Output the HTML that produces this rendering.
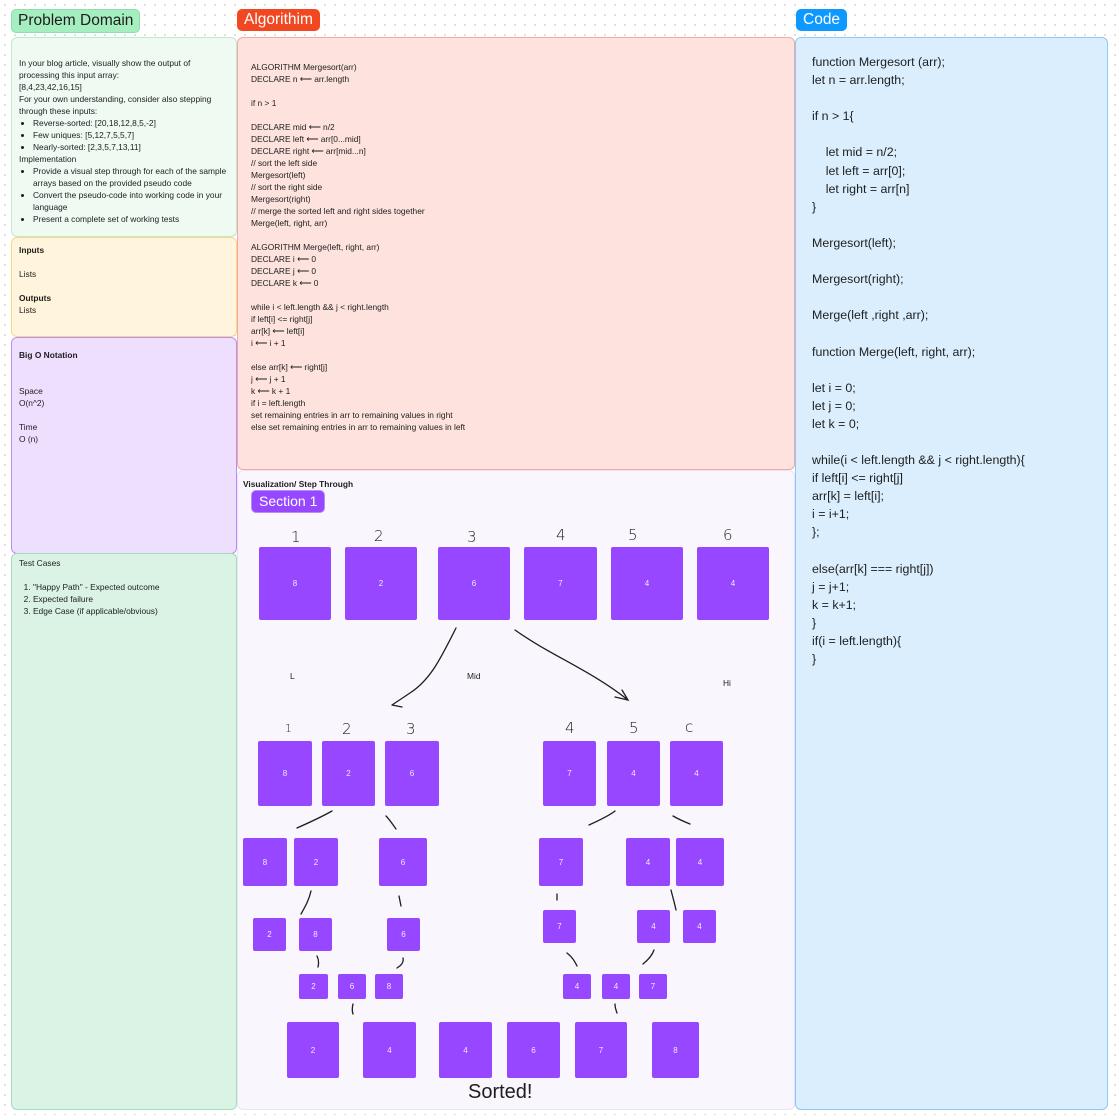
<!DOCTYPE html>
<html><head><meta charset="utf-8"><style>
*{margin:0;padding:0;box-sizing:border-box}
body{width:1117px;height:1115px;position:relative;overflow:hidden;background:#fff;font-family:"Liberation Sans",sans-serif;color:#1e1e1e;
background-image:radial-gradient(#d6d6d6 0.8px,transparent 1px);background-size:10px 10px}
.a{position:absolute}
.p{position:absolute;border:1px solid;border-radius:6px}
.tag{position:absolute;border-radius:5px;font-size:15.5px;line-height:22px;padding:0 7px}
.t{position:absolute;font-size:8.4px;line-height:12px;white-space:pre}
.code{position:absolute;font-size:12.4px;line-height:18.1px;white-space:pre;left:812px;top:53px}
.b{position:absolute;background:#9747ff;border-radius:2px;color:#f3eaff;font-size:8px;display:flex;align-items:center;justify-content:center}
.n{position:absolute;font-size:15px;font-family:"DejaVu Sans",sans-serif;font-weight:300}
ul,ol{padding-left:14px}
</style></head><body>
<div class="tag" style="left:11px;top:9px;background:#a5eec0;border:1px solid #8fdcae;padding:0 6px">Problem Domain</div>
<div class="tag" style="left:237px;top:9px;background:#f24822;color:#fff">Algorithim</div>
<div class="tag" style="left:796px;top:9px;background:#0d99ff;color:#fff">Code</div>

<div class="p" style="left:11px;top:37px;width:226px;height:200px;background:#effaf3;border-color:#bfeccf"></div>
<div class="p" style="left:11px;top:237px;width:226px;height:100px;background:#fff4dc;border-color:#f7d68a"></div>
<div class="p" style="left:11px;top:337px;width:226px;height:217px;background:#efdffe;border-color:#b98cf7"></div>
<div class="p" style="left:11px;top:553px;width:226px;height:557px;background:#dbf3e4;border-color:#a2deb8"></div>
<div class="p" style="left:237px;top:37px;width:558px;height:433px;background:#fde2dd;border-color:#f5a8a3"></div>
<div class="p" style="left:237px;top:470px;width:558px;height:640px;background:#f9f6fd;border-color:#ebe1fa"></div>
<div class="p" style="left:795px;top:37px;width:313px;height:1073px;background:#daeefd;border-color:#8ec8f4"></div>

<div class="t" style="left:19px;top:57px;white-space:normal;width:208px">In your blog article, visually show the output of processing this input array:<br>[8,4,23,42,16,15]<br>For your own understanding, consider also stepping through these inputs:
<ul><li>Reverse-sorted: [20,18,12,8,5,-2]</li><li>Few uniques: [5,12,7,5,5,7]</li><li>Nearly-sorted: [2,3,5,7,13,11]</li></ul>Implementation
<ul><li>Provide a visual step through for each of the sample arrays based on the provided pseudo code</li><li>Convert the pseudo-code into working code in your language</li><li>Present a complete set of working tests</li></ul></div>
<div class="t" style="left:19px;top:244px"><b>Inputs</b>

Lists

<b>Outputs</b>
Lists</div>
<div class="t" style="left:19px;top:349px"><b>Big O Notation</b>


Space
O(n^2)

Time
O (n)</div>
<div class="t" style="left:19px;top:557px">Test Cases

  1. "Happy Path" - Expected outcome
  2. Expected failure
  3. Edge Case (if applicable/obvious)</div>

<div class="t" style="left:251px;top:61px">ALGORITHM Mergesort(arr)
DECLARE n ⟵ arr.length

if n &gt; 1

DECLARE mid ⟵ n/2
DECLARE left ⟵ arr[0...mid]
DECLARE right ⟵ arr[mid...n]
// sort the left side
Mergesort(left)
// sort the right side
Mergesort(right)
// merge the sorted left and right sides together
Merge(left, right, arr)

ALGORITHM Merge(left, right, arr)
DECLARE i ⟵ 0
DECLARE j ⟵ 0
DECLARE k ⟵ 0

while i &lt; left.length &amp;&amp; j &lt; right.length
if left[i] &lt;= right[j]
arr[k] ⟵ left[i]
i ⟵ i + 1

else arr[k] ⟵ right[j]
j ⟵ j + 1
k ⟵ k + 1
if i = left.length
set remaining entries in arr to remaining values in right
else set remaining entries in arr to remaining values in left</div>

<div class="code">function Mergesort (arr);
let n = arr.length;

if n &gt; 1{

    let mid = n/2;
    let left = arr[0];
    let right = arr[n]
}

Mergesort(left);

Mergesort(right);

Merge(left ,right ,arr);

function Merge(left, right, arr);

let i = 0;
let j = 0;
let k = 0;

while(i &lt; left.length &amp;&amp; j &lt; right.length){
if left[i] &lt;= right[j]
arr[k] = left[i];
i = i+1;
};

else(arr[k] === right[j])
j = j+1;
k = k+1;
}
if(i = left.length){
}</div>

<div class="t" style="left:243px;top:478px;font-weight:bold">Visualization/ Step Through</div>
<div class="tag" style="left:251px;top:490px;background:#9747ff;color:#fff;font-size:14px;line-height:21px;border:1px solid #b58cf5">Section 1</div>

<div class="b" style="left:259px;top:547px;width:72px;height:73px">8</div>
<div class="b" style="left:345px;top:547px;width:72px;height:73px">2</div>
<div class="b" style="left:438px;top:547px;width:72px;height:73px">6</div>
<div class="b" style="left:524px;top:547px;width:73px;height:73px">7</div>
<div class="b" style="left:611px;top:547px;width:72px;height:73px">4</div>
<div class="b" style="left:697px;top:547px;width:72px;height:73px">4</div>
<div class="n" style="left:291px;top:528px">1</div>
<div class="n" style="left:374px;top:527px">2</div>
<div class="n" style="left:467px;top:528px">3</div>
<div class="n" style="left:556px;top:526px">4</div>
<div class="n" style="left:628px;top:526px">5</div>
<div class="n" style="left:723px;top:526px">6</div>
<div class="t" style="left:290px;top:670px">L</div>
<div class="t" style="left:467px;top:670px">Mid</div>
<div class="t" style="left:723px;top:677px">Hi</div>

<div class="b" style="left:258px;top:741px;width:54px;height:65px">8</div>
<div class="b" style="left:322px;top:741px;width:53px;height:65px">2</div>
<div class="b" style="left:385px;top:741px;width:54px;height:65px">6</div>
<div class="b" style="left:543px;top:741px;width:53px;height:65px">7</div>
<div class="b" style="left:607px;top:741px;width:53px;height:65px">4</div>
<div class="b" style="left:670px;top:741px;width:53px;height:65px">4</div>
<div class="n" style="left:285px;top:722px;font-size:11px">1</div>
<div class="n" style="left:342px;top:720px">2</div>
<div class="n" style="left:406px;top:720px">3</div>
<div class="n" style="left:565px;top:719px">4</div>
<div class="n" style="left:629px;top:719px">5</div>
<div class="n" style="left:685px;top:718px">c</div>

<div class="b" style="left:243px;top:838px;width:44px;height:48px">8</div>
<div class="b" style="left:294px;top:838px;width:44px;height:48px">2</div>
<div class="b" style="left:379px;top:838px;width:48px;height:48px">6</div>
<div class="b" style="left:539px;top:838px;width:44px;height:48px">7</div>
<div class="b" style="left:626px;top:838px;width:44px;height:48px">4</div>
<div class="b" style="left:676px;top:838px;width:48px;height:48px">4</div>

<div class="b" style="left:253px;top:918px;width:33px;height:33px">2</div>
<div class="b" style="left:299px;top:918px;width:33px;height:33px">8</div>
<div class="b" style="left:387px;top:918px;width:33px;height:33px">6</div>
<div class="b" style="left:543px;top:910px;width:33px;height:33px">7</div>
<div class="b" style="left:637px;top:910px;width:33px;height:33px">4</div>
<div class="b" style="left:683px;top:910px;width:33px;height:33px">4</div>

<div class="b" style="left:299px;top:974px;width:29px;height:25px">2</div>
<div class="b" style="left:338px;top:974px;width:28px;height:25px">6</div>
<div class="b" style="left:375px;top:974px;width:28px;height:25px">8</div>
<div class="b" style="left:563px;top:974px;width:28px;height:25px">4</div>
<div class="b" style="left:602px;top:974px;width:28px;height:25px">4</div>
<div class="b" style="left:639px;top:974px;width:28px;height:25px">7</div>

<div class="b" style="left:287px;top:1022px;width:52px;height:56px">2</div>
<div class="b" style="left:363px;top:1022px;width:53px;height:56px">4</div>
<div class="b" style="left:439px;top:1022px;width:53px;height:56px">4</div>
<div class="b" style="left:507px;top:1022px;width:53px;height:56px">6</div>
<div class="b" style="left:575px;top:1022px;width:52px;height:56px">7</div>
<div class="b" style="left:652px;top:1022px;width:47px;height:56px">8</div>
<div class="a" style="left:468px;top:1081px;font-size:20px">Sorted!</div>

<svg class="a" style="left:0;top:0" width="1117" height="1115" fill="none" stroke="#1e1e1e" stroke-width="1.3" stroke-linecap="round">
<path d="M456 628 C440 660 430 680 410 693 L392 705 M392 705 L401 699 M392 705 L402 707"/>
<path d="M515 630 C550 655 590 670 628 700 M615 697 L628 700 L622 690"/>
<path d="M297 828 C315 820 325 815 332 811 M386 816 C390 820 393 825 396 829"/>
<path d="M589 825 C600 820 610 815 615 811 M673 816 C680 820 685 822 690 824"/>
<path d="M311 891 C309 900 305 907 301 914 M399 896 L401 906"/>
<path d="M557 894 L557 900 M671 890 C673 898 675 905 676 910"/>
<path d="M317 956 C319 960 319 963 318 967 M403 958 C404 962 402 965 397 968"/>
<path d="M567 953 C572 957 574 960 577 966 M654 950 C652 956 648 960 643 964"/>
<path d="M353 1004 C352 1008 352 1011 353 1014 M615 1004 C615 1008 616 1010 617 1013"/>
</svg>
</body></html>
